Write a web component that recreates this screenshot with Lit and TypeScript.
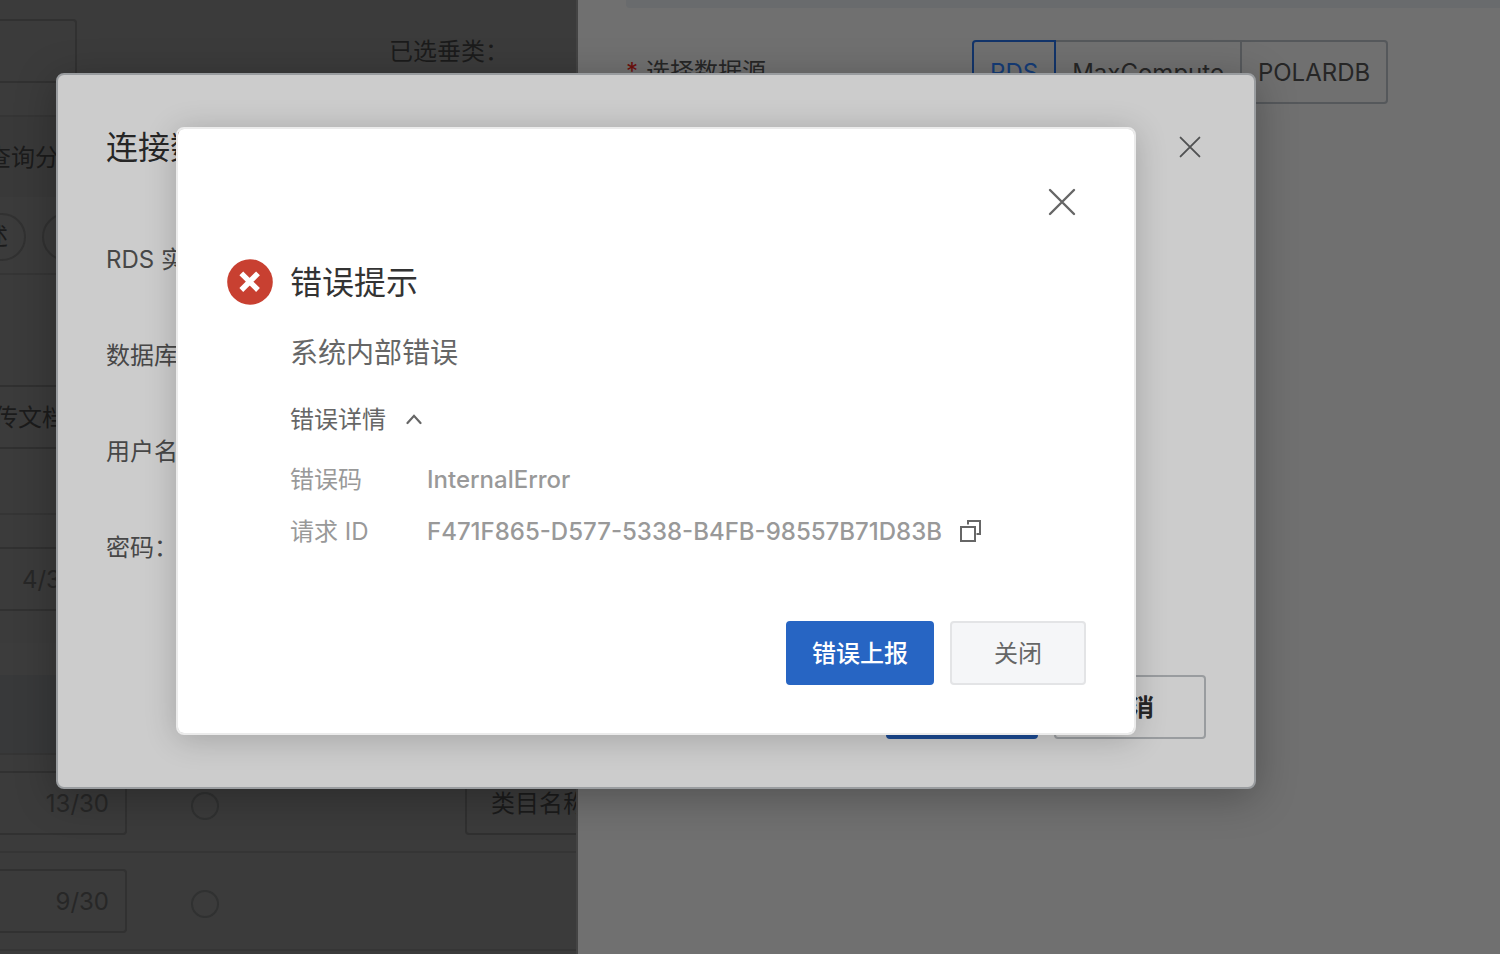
import { LitElement, html, css } from "lit";
import { customElement, state } from "lit/decorators.js";

const base = css`
  :host {
    display: block;
    box-sizing: border-box;
    font-family: Inter, "Noto Sans CJK SC", sans-serif;
    font-size: 24px;
    line-height: 36px;
  }
  *,
  *::before,
  *::after {
    box-sizing: border-box;
  }
  button,
  input,
  select {
    font: inherit;
    color: inherit;
    background: none;
    border: 0;
    margin: 0;
    padding: 0;
    outline: 0;
  }
  h1,
  h2,
  p,
  dl,
  dd,
  dt {
    margin: 0;
    font-weight: 400;
  }
  svg {
    display: block;
  }
`;

const closeIcon = (size: number) => html`
  <svg width=${size} height=${size} viewBox="0 0 28 28" fill="none" stroke="currentColor" stroke-width="2.4" stroke-linecap="round">
    <path d="M2 2 L26 26 M26 2 L2 26" />
  </svg>
`;

@customElement("catalog-panel")
export class CatalogPanel extends LitElement {
  static styles = [
    base,
    css`
      :host {
        background: #3b3b3b;
        color: #1b1b1b;
        overflow: hidden;
      }
      .scroller {
        margin-left: -58px;
      }
      .filters {
        display: flex;
        align-items: center;
        gap: 312px;
        padding: 19px 0 32px;
        border-bottom: 2px solid #353535;
      }
      .filters span,
      .field span {
        padding-top: 2px;
      }
      .field {
        display: flex;
        flex: none;
        align-items: center;
        height: 64px;
        width: 185px;
        padding: 0 16px;
        border: 2px solid #313131;
        border-radius: 4px;
        color: #272727;
      }
      .field input {
        flex: 1;
        min-width: 0;
      }
      .search {
        width: 135px;
      }
      .medium {
        width: 152px;
        margin-top: 32px;
      }
      .heading {
        padding: 23px 45px 21px;
        background: #393939;
      }
      .tags {
        display: flex;
        gap: 16px;
        padding: 16px 0 12px;
        border-bottom: 2px solid #353535;
      }
      .tag {
        height: 48px;
        padding: 0 16px;
        border: 2px solid #313131;
        border-radius: 24px;
        line-height: 44px;
      }
      .upload {
        display: block;
        width: 152px;
        height: 64px;
        padding-top: 2px;
        margin: 110px 0 64px;
        border: 2px solid #303030;
        border-radius: 4px;
      }
      .section {
        border-top: 2px solid #353535;
        padding-bottom: 32px;
      }
      .strip {
        height: 32px;
        background: #3c3c3c;
      }
      .table-head {
        height: 80px;
        background: #38393a;
        border-bottom: 2px solid #353535;
      }
      .row {
        display: flex;
        align-items: center;
        padding: 16px 0;
        border-bottom: 2px solid #353535;
      }
      .radio {
        appearance: none;
        flex: none;
        width: 28px;
        height: 28px;
        margin: 6px 246px 0 64px;
        border: 2px solid #303131;
        border-radius: 50%;
      }
      .choice {
        appearance: none;
        flex: none;
        width: 240px;
        height: 64px;
        padding: 2px 24px 0;
        border: 2px solid #303030;
        border-radius: 4px;
      }
    `,
  ];

  render() {
    return html`
      <div class="scroller">
        <div class="filters">
          <div class="field search"><input aria-label="搜索" /></div>
          <span>已选垂类：</span>
        </div>
        <div class="heading">查询分析</div>
        <div class="tags">
          <button class="tag">描述</button>
          <button class="tag">标签</button>
        </div>
        <button class="upload">上传文档</button>
        <div class="section">
          <div class="field medium"><input aria-label="名称" /><span>4/30</span></div>
        </div>
        <div class="strip"></div>
        <div class="table-head"></div>
        <div class="row">
          <div class="field"><input aria-label="字段一" /><span>13/30</span></div>
          <input class="radio" type="radio" name="key" aria-label="选择字段一" />
          <select class="choice" aria-label="类目"><option>类目名称</option></select>
        </div>
        <div class="row">
          <div class="field"><input aria-label="字段二" /><span>9/30</span></div>
          <input class="radio" type="radio" name="key" aria-label="选择字段二" />
        </div>
      </div>
    `;
  }
}

@customElement("source-drawer")
export class SourceDrawer extends LitElement {
  @state() private selected = "RDS";

  static styles = [
    base,
    css`
      :host {
        background: #707070;
        border-left: 2px solid #444444;
        padding-left: 48px;
        color: #262626;
      }
      .notice {
        height: 8px;
        background: #696b6d;
        border-bottom-left-radius: 4px;
      }
      .form-row {
        display: flex;
        align-items: center;
        margin-top: 32px;
      }
      .label {
        width: 346px;
      }
      .required {
        color: #6e0f0c;
        margin-right: 8px;
      }
      .group {
        display: flex;
      }
      .option {
        height: 64px;
        padding: 2px 16px 0;
        border: 2px solid #55585b;
        margin-left: -2px;
      }
      .option:first-child {
        margin-left: 0;
        border-radius: 4px 0 0 4px;
      }
      .option:last-child {
        border-radius: 0 4px 4px 0;
      }
      .option[aria-pressed="true"] {
        position: relative;
        color: #153c77;
        border-color: #12346a;
      }
    `,
  ];

  render() {
    return html`
      <div class="notice"></div>
      <div class="form-row">
        <span class="label"><span class="required">*</span>选择数据源</span>
        <div class="group">
          ${["RDS", "MaxCompute", "POLARDB"].map(
            (name) => html`<button
              class="option"
              aria-pressed=${this.selected === name ? "true" : "false"}
              @click=${() => (this.selected = name)}
            >${name}</button>`
          )}
        </div>
      </div>
    `;
  }
}

@customElement("connect-dialog")
export class ConnectDialog extends LitElement {
  static styles = [
    base,
    css`
      :host {
        padding: 48px;
        background: #cccccc;
        border: 2px solid #999c9f;
        border-radius: 8px;
        box-shadow: 0 8px 40px rgba(0, 0, 0, 0.28);
        color: #474747;
      }
      .header {
        display: flex;
        align-items: center;
        justify-content: space-between;
        height: 48px;
      }
      .title {
        padding-top: 2px;
        font-size: 32px;
        color: #262626;
      }
      .close {
        width: 32px;
        display: grid;
        place-items: center;
        color: #505152;
      }
      .form {
        display: grid;
        gap: 32px;
        margin: 56px 0 96px;
      }
      .form-row {
        display: grid;
        grid-template-columns: 240px 1fr;
        align-items: center;
        height: 64px;
        padding-right: 120px;
      }
      .form-row label {
        padding-top: 2px;
      }
      .form-row input {
        height: 64px;
        border: 2px solid #999c9f;
        border-radius: 4px;
        padding: 0 16px;
      }
      .footer {
        display: flex;
        justify-content: flex-end;
        gap: 16px;
      }
      .button {
        width: 152px;
        height: 64px;
        padding-top: 2px;
        border: 2px solid #999c9f;
        border-radius: 4px;
        font-weight: 600;
        color: #262626;
      }
      .primary {
        background: #1b4a92;
        border-color: #1b4a92;
        color: #cccccc;
      }
    `,
  ];

  render() {
    const fields = [
      ["instance", "RDS 实例：", "text"],
      ["database", "数据库：", "text"],
      ["user", "用户名：", "text"],
      ["password", "密码：", "password"],
    ];
    return html`
      <div class="header">
        <h1 class="title">连接数据源</h1>
        <button class="close" aria-label="关闭">${closeIcon(22)}</button>
      </div>
      <div class="form">
        ${fields.map(
          ([id, label, type]) => html`<div class="form-row">
            <label for=${id}>${label}</label><input id=${id} type=${type} />
          </div>`
        )}
      </div>
      <div class="footer">
        <button class="button primary">连接</button>
        <button class="button">取消</button>
      </div>
    `;
  }
}

@customElement("error-dialog")
export class ErrorDialog extends LitElement {
  @state() private expanded = true;

  static styles = [
    base,
    css`
      :host {
        padding: 48px;
        background: #ffffff;
        background-clip: padding-box;
        border: 2px solid #ebebeb;
        border-radius: 8px;
        box-shadow: 0 4px 32px rgba(0, 0, 0, 0.2);
        color: #666666;
      }
      .header {
        display: flex;
        justify-content: flex-end;
        height: 50px;
      }
      .close {
        width: 48px;
        display: grid;
        place-items: center;
      }
      .body {
        display: grid;
        grid-template-columns: 48px 1fr;
        column-gap: 16px;
        margin: 32px 0 71px;
      }
      .title {
        font-size: 32px;
        line-height: 48px;
        color: #333333;
      }
      .message {
        margin-top: 25px;
        font-size: 28px;
        line-height: 42px;
      }
      .toggle {
        display: flex;
        align-items: center;
        gap: 20px;
        margin-top: 28px;
      }
      .details {
        display: grid;
        grid-template-columns: 137px auto;
        row-gap: 16px;
        margin-top: 24px;
        color: #999999;
      }
      .value {
        display: flex;
        align-items: center;
        gap: 16px;
        font-weight: 500;
      }
      .copy {
        color: #666666;
      }
      .footer {
        display: flex;
        justify-content: flex-end;
        gap: 16px;
      }
      .button {
        height: 64px;
        padding: 2px 42px 0;
        background: #f5f6f8;
        border: 2px solid #e3e4e6;
        border-radius: 4px;
      }
      .primary {
        padding: 2px 24px 0;
        background: #2765c3;
        border-color: #2765c3;
        color: #ffffff;
        font-weight: 500;
      }
    `,
  ];

  render() {
    return html`
      <div class="header">
        <button class="close" aria-label="关闭">${closeIcon(28)}</button>
      </div>
      <div class="body">
        <svg width="48" height="48" viewBox="0 0 48 48">
          <circle cx="24" cy="23" r="22.8" fill="#c84031" />
          <path d="M15.3 14.4 L32 31 M32 14.4 L15.3 31" stroke="#fff" stroke-width="5.4" />
        </svg>
        <div>
          <h2 class="title">错误提示</h2>
          <p class="message">系统内部错误</p>
          <button class="toggle" @click=${() => (this.expanded = !this.expanded)}>
            错误详情
            <svg width="16" height="12" viewBox="0 0 16 12" fill="none" stroke="currentColor" stroke-width="2.2" stroke-linecap="round">
              <path d="M1.5 9 L8 1.8 L14.5 9" />
            </svg>
          </button>
          ${this.expanded
            ? html`<dl class="details">
                <dt>错误码</dt>
                <dd class="value">InternalError</dd>
                <dt>请求 ID</dt>
                <dd class="value">
                  F471F865-D577-5338-B4FB-98557B71D83B
                  <button class="copy" aria-label="复制">
                    <svg width="24" height="24" viewBox="0 0 24 24" fill="none" stroke="currentColor" stroke-width="2">
                      <path d="M3 7 H17 V21 H3 Z M10 4.5 V1 H22 V14 H18.5" />
                    </svg>
                  </button>
                </dd>
              </dl>`
            : null}
        </div>
      </div>
      <div class="footer">
        <button class="button primary">错误上报</button>
        <button class="button">关闭</button>
      </div>
    `;
  }
}

@customElement("app-root")
export class AppRoot extends LitElement {
  static styles = [
    base,
    css`
      :host {
        position: relative;
        overflow: hidden;
        height: 100vh;
      }
      .page {
        display: flex;
        height: 100%;
      }
      .catalog {
        flex: 0 0 576px;
      }
      .drawer {
        flex: 1;
        min-width: 0;
      }
      .overlay {
        position: absolute;
        inset: 0 188px 92px 0;
        display: grid;
        place-items: center;
      }
      .connect {
        width: 1200px;
      }
      .error {
        width: 960px;
      }
    `,
  ];

  render() {
    return html`
      <div class="page">
        <catalog-panel class="catalog"></catalog-panel>
        <source-drawer class="drawer"></source-drawer>
      </div>
      <div class="overlay"><connect-dialog class="connect" role="dialog"></connect-dialog></div>
      <div class="overlay"><error-dialog class="error" role="dialog"></error-dialog></div>
    `;
  }
}
